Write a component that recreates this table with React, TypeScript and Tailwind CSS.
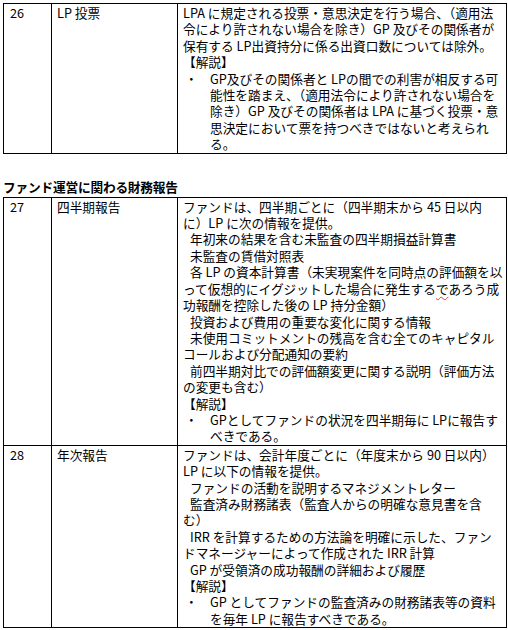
import React from 'react';

type Line = { text: React.ReactNode; indent?: boolean };
type Block = { kind: 'lines'; lines: Line[] } | { kind: 'bullet'; lines: React.ReactNode[] };

interface Row {
  no: string;
  title: string;
  blocks: Block[];
}

const font = { fontFamily: '"Noto Sans CJK JP", "Liberation Sans", sans-serif' };

const upperRows: Row[] = [
  {
    no: '26',
    title: 'LP 投票',
    blocks: [
      {
        kind: 'lines',
        lines: [
          { text: 'LPA に規定される投票・意思決定を行う場合、（適用法' },
          { text: '令により許されない場合を除き）GP 及びその関係者が' },
          { text: '保有する LP出資持分に係る出資口数については除外。' },
          { text: '【解説】' },
        ],
      },
      {
        kind: 'bullet',
        lines: [
          'GP及びその関係者と LPの間での利害が相反する可',
          '能性を踏まえ、（適用法令により許されない場合を',
          '除き）GP 及びその関係者は LPA に基づく投票・意',
          '思決定において票を持つべきではないと考えられ',
          'る。',
        ],
      },
    ],
  },
];

const lowerRows: Row[] = [
  {
    no: '27',
    title: '四半期報告',
    blocks: [
      {
        kind: 'lines',
        lines: [
          { text: 'ファンドは、四半期ごとに（四半期末から 45 日以内' },
          { text: 'に）LP に次の情報を提供。' },
          { text: '年初来の結果を含む未監査の四半期損益計算書', indent: true },
          { text: '未監査の賃借対照表', indent: true },
          { text: '各 LP の資本計算書（未実現案件を同時点の評価額を以', indent: true },
          {
            text: (
              <>
                って仮想的にイグジットした場合に発生する
                <span className="underline decoration-wavy decoration-[#e0393e] decoration-1 underline-offset-2">で</span>
                あろう成
              </>
            ),
          },
          { text: '功報酬を控除した後の LP 持分金額）' },
          { text: '投資および費用の重要な変化に関する情報', indent: true },
          { text: '未使用コミットメントの残高を含む全てのキャピタル', indent: true },
          { text: 'コールおよび分配通知の要約' },
          { text: '前四半期対比での評価額変更に関する説明（評価方法', indent: true },
          { text: 'の変更も含む）' },
          { text: '【解説】' },
        ],
      },
      {
        kind: 'bullet',
        lines: ['GPとしてファンドの状況を四半期毎に LPに報告す', 'べきである。'],
      },
    ],
  },
  {
    no: '28',
    title: '年次報告',
    blocks: [
      {
        kind: 'lines',
        lines: [
          { text: 'ファンドは、会計年度ごとに（年度末から 90 日以内）' },
          { text: 'LP に以下の情報を提供。' },
          { text: 'ファンドの活動を説明するマネジメントレター', indent: true },
          { text: '監査済み財務諸表（監査人からの明確な意見書を含', indent: true },
          { text: 'む）' },
          { text: 'IRR を計算するための方法論を明確に示した、ファン', indent: true },
          { text: 'ドマネージャーによって作成された IRR 計算' },
          { text: 'GP が受領済の成功報酬の詳細および履歴', indent: true },
          { text: '【解説】' },
        ],
      },
      {
        kind: 'bullet',
        lines: ['GP としてファンドの監査済みの財務諸表等の資料', 'を毎年 LP に報告すべきである。'],
      },
    ],
  },
];

function CellBody({ blocks }: { blocks: Block[] }) {
  return (
    <div>
      {blocks.map((block, i) =>
        block.kind === 'lines' ? (
          <div key={i}>
            {block.lines.map((line, j) => (
              <div key={j} className={`whitespace-nowrap ${line.indent ? 'pl-[7px]' : ''}`}>
                {line.text}
              </div>
            ))}
          </div>
        ) : (
          <div key={i} className="flex">
            <div className="w-[27px] shrink-0 pl-[2px]">・</div>
            <div>
              {block.lines.map((line, j) => (
                <div key={j} className="whitespace-nowrap">
                  {line}
                </div>
              ))}
            </div>
          </div>
        )
      )}
    </div>
  );
}

function ReportTable({ rows }: { rows: Row[] }) {
  return (
    <table className="w-[503px] table-fixed border-collapse border-[1.5px] border-black">
      <colgroup>
        <col className="w-[48px]" />
        <col className="w-[126px]" />
        <col className="w-[329px]" />
      </colgroup>
      <tbody>
        {rows.map((row) => (
          <tr key={row.no}>
            <td className="border border-black align-top pl-[6px] pt-px">{row.no}</td>
            <td className="border border-black align-top pl-[5px] pt-px">{row.title}</td>
            <td className="border border-black align-top pl-[5px] pt-px overflow-hidden">
              <CellBody blocks={row.blocks} />
            </td>
          </tr>
        ))}
      </tbody>
    </table>
  );
}

export default function App() {
  return (
    <div className="w-[508px] h-[630px] bg-white text-black text-[12.7px] leading-[16.4px] pl-[3px] pt-[3px]" style={font}>
      <ReportTable rows={upperRows} />
      <div className="mt-[25px] mb-[2px] font-bold text-[12.7px] leading-[16px] tracking-[-0.2px]">
        ファンド運営に関わる財務報告
      </div>
      <ReportTable rows={lowerRows} />
    </div>
  );
}
